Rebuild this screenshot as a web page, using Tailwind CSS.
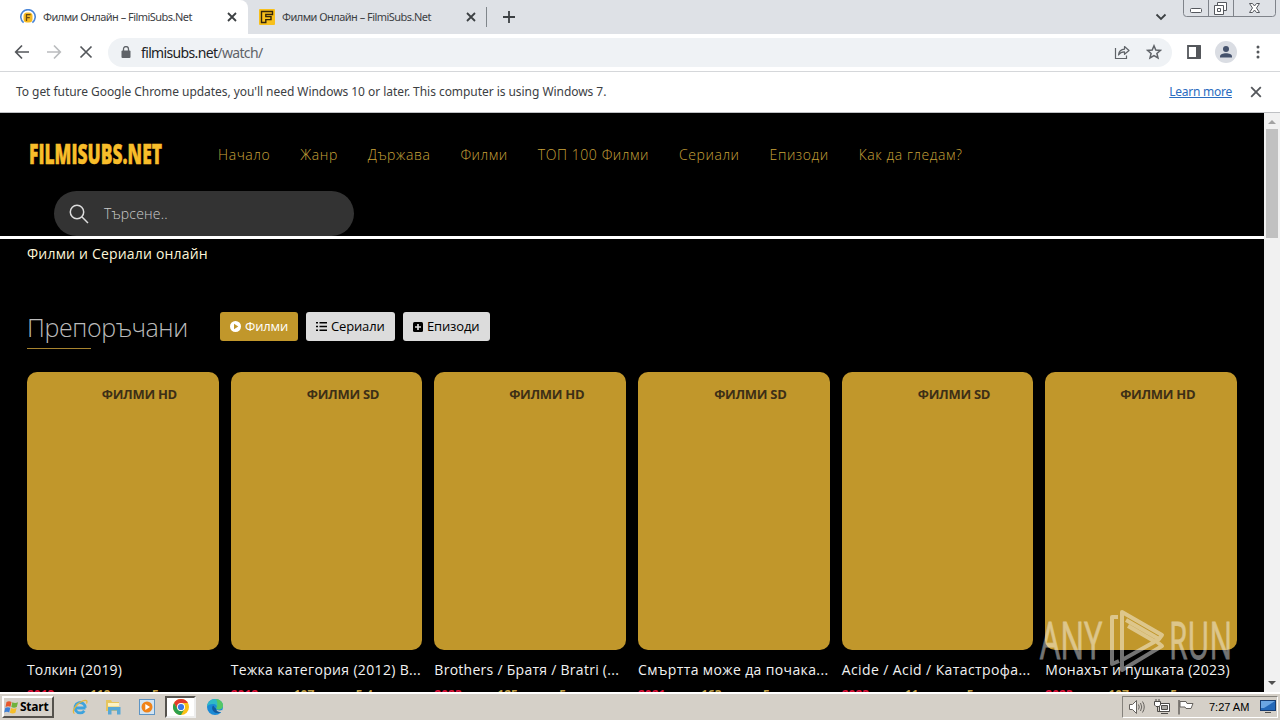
<!DOCTYPE html>
<html lang="bg">
<head>
  <meta charset="UTF-8" />
  <meta name="viewport" content="width=device-width, initial-scale=1.0"/>
  <title>Филми Онлайн – FilmiSubs.Net</title>
  <script src="https://cdn.jsdelivr.net/npm/@tailwindcss/browser@4"></script>
</head>

<body class="w-[1280px] h-[720px] overflow-hidden flex flex-col bg-black font-['Open_Sans','Noto_Sans',sans-serif] whitespace-nowrap">

  <!-- Tab strip -->
  <div class="relative h-[34px] shrink-0 bg-[#dee1e6] flex text-[11px] text-[#3c4043] font-['Noto_Sans',sans-serif]">
    <div class="w-[248px] h-full bg-white rounded-tr-lg flex items-center pl-5 pr-[10px]">
      <svg class="w-4 h-4 shrink-0" viewBox="0 0 16 16" fill="none">
        <path d="M3.6 13.6A7.2 7.2 0 1 1 12.4 13.6" stroke="#4a86d8" stroke-width="1.6"/>
        <rect x="3.500" y="3.500" width="9" height="10" rx="3.500" fill="#f5b921"/>
        <path d="M6.5 12V5.6H10.6M6.5 8.6H9.8" stroke="#6b4a10" stroke-width="1.3"/>
      </svg>
      <span class="ml-[7px] tracking-[-0.53px]">Филми Онлайн – FilmiSubs.Net</span>
      <svg class="w-3 h-3 ml-auto" viewBox="0 0 12 12" stroke="#3c4043" stroke-width="1.8"><path d="M2 2l8 8M10 2l-8 8"/></svg>
    </div>
    <div class="w-[239px] h-full flex items-center pl-[11px] pr-[10px]">
      <svg class="w-4 h-4 shrink-0" viewBox="0 0 16 16" fill="none">
        <rect width="16" height="16" rx="1" fill="#f8c01c"/>
        <path d="M2.5 2.5H13.5V5.5H6.8V7.6H12V10.6H6.8V13.5H2.5Z" stroke="#35270b" stroke-width="1.4"/>
      </svg>
      <span class="ml-[7px] tracking-[-0.53px]">Филми Онлайн – FilmiSubs.Net</span>
      <svg class="w-3 h-3 ml-auto" viewBox="0 0 12 12" stroke="#3c4043" stroke-width="1.8"><path d="M2 2l8 8M10 2l-8 8"/></svg>
    </div>
    <div class="w-px h-5 mt-[7px] -ml-px bg-[#80868b]"></div>
    <svg class="w-[14px] h-[14px] ml-[15px] mt-[10px]" viewBox="0 0 14 14" stroke="#3c4043" stroke-width="1.8"><path d="M7 1v12M1 7h12"/></svg>
    <svg class="w-3 h-3 ml-auto mt-[11px] mr-[113px]" viewBox="0 0 12 12" fill="none" stroke="#3c4043" stroke-width="1.8"><path d="M1.5 3.5L6 8l4.500-4.500"/></svg>
    <!-- Window buttons -->
    <svg class="absolute top-0 right-1 w-[93px] h-[18px]" viewBox="0 0 93 18" fill="none" stroke="#7f838a">
      <path d="M.5 0V13.500Q.5 16.500 3.500 16.500H89.500Q92.500 16.500 92.500 13.500V0M25.500 0V16M50.500 0V16"/>
      <g stroke="#55585e" fill="#fff">
        <rect x="7.500" y="8.500" width="11" height="4" rx="1"/>
        <path d="M34.500 2.500H43.500V10.500H34.500Z"/>
        <path d="M31.500 5.500H40.500V14.500H31.500ZM34.500 8.500H37.500V11.500H34.500Z"/>
        <path d="M66.500 3.500H69.500L71.500 6 73.500 3.500H76.500L73.500 8 76.500 12.500H73.500L71.500 10 69.500 12.500H66.500L69.500 8Z"/>
      </g>
    </svg>
  </div>

  <!-- Toolbar -->
  <div class="h-[38px] shrink-0 bg-white border-b border-[#d5d7da] flex items-center pl-[14px] pr-[14px] pb-px">
    <svg class="w-4 h-4" viewBox="0 0 16 16" fill="none" stroke="#54575b" stroke-width="1.7"><path d="M15 8H2M8 1.500L1.700 8 8 14.500"/></svg>
    <svg class="w-4 h-4 ml-4" viewBox="0 0 16 16" fill="none" stroke="#babcbe" stroke-width="1.700"><path d="M1 8H14M8 1.500L14.300 8 8 14.500"/></svg>
    <svg class="w-[14px] h-[14px] ml-[17px]" viewBox="0 0 14 14" stroke="#54575b" stroke-width="1.700"><path d="M1.500 1.500l11 11M12.500 1.500l-11 11"/></svg>
    <div class="ml-[15px] w-[1064px] h-[29px] rounded-full bg-[#eff2f5] flex items-center pl-[13px] pr-[10px]">
      <svg class="w-[10px] h-3" viewBox="0 0 10 12"><rect x=".5" y="4.500" width="9" height="7.500" rx="1" fill="#5f6368"/><path d="M2.500 5V3a2.500 2.500 0 0 1 5 0V5" fill="none" stroke="#5f6368" stroke-width="1.300"/></svg>
      <span class="ml-[10px] text-[14px] tracking-[-0.65px] text-[#5f6368] font-['Noto_Sans',sans-serif]"><span class="text-[#202124]">filmisubs.net</span>/watch/</span>
      <svg class="w-4 h-4 ml-auto" viewBox="0 0 16 16" fill="none" stroke="#5f6368" stroke-width="1.200"><path d="M1.500 4V14.500H12.500V11.500"/><path d="M4.500 11C5 7.200 7.200 5.300 10.500 5.200V2.500L15 6.500 10.500 10.300V7.800C8 7.700 6 8.700 4.500 11Z" stroke-linejoin="round"/></svg>
      <svg class="w-4 h-4 ml-4" viewBox="0 0 16 16" fill="none" stroke="#5f6368" stroke-width="1.500"><path d="M8 1.800L9.800 6l4.600.4-3.500 3 1.100 4.500L8 11.500l-4 2.400 1.100-4.500-3.500-3L6.200 6Z"/></svg>
    </div>
    <svg class="w-[14px] h-[14px] ml-[15px]" viewBox="0 0 14 14"><path d="M1 1H13V13H1Z" fill="none" stroke="#54575b" stroke-width="1.800"/><path d="M9 1H14V13H9Z" fill="#54575b"/></svg>
    <svg class="w-[22px] h-[22px] ml-[14px]" viewBox="0 0 22 22" fill="#45526c"><circle cx="11" cy="11" r="11" fill="#dadde3"/><circle cx="11" cy="8" r="3"/><path d="M5 16.500V15.500C5 13.300 8 12.300 11 12.300S17 13.300 17 15.500V16.500Z"/></svg>
    <svg class="w-1 h-4 ml-[19px]" viewBox="0 0 4 16" fill="#54575b"><circle cx="2" cy="3" r="1.500"/><circle cx="2" cy="8" r="1.500"/><circle cx="2" cy="13" r="1.500"/></svg>
  </div>

  <!-- Update notice -->
  <div class="h-[41px] shrink-0 bg-white border-b border-[#bfc1c4] flex items-center px-4 text-[12px] text-[#3c4043] font-['Noto_Sans',sans-serif]">
    <span class="tracking-[-0.05px]">To get future Google Chrome updates, you'll need Windows 10 or later. This computer is using Windows 7.</span>
    <span class="ml-auto tracking-[-0.25px] text-[#2a6cc0] underline">Learn more</span>
    <svg class="w-[12px] h-[12px] ml-[18px] mr-[2px]" viewBox="0 0 12 12" stroke="#54575b" stroke-width="1.800"><path d="M1.200 1.200l9.600 9.600M10.800 1.200l-9.600 9.600"/></svg>
  </div>

  <!-- Page -->
  <div class="h-[579px] shrink-0 flex">
    <main class="w-[1264px] h-full overflow-hidden">
      <header class="h-[126px] border-b-[3px] border-white">
        <nav class="h-[78px] pt-[4px] pl-[29px] flex items-center text-[14px] font-light text-[#c9a33a]">
          <svg class="w-[134px] h-6 shrink-0 overflow-visible" viewBox="0 0 134 24"><text x="0" y="22" textLength="133" lengthAdjust="spacingAndGlyphs" font-family="Open Sans" font-weight="800" font-size="28" fill="#f8bd2a" stroke="#f8bd2a" stroke-width=".5">FILMISUBS.NET</text></svg>
          <div class="ml-[55px] flex gap-[30px] tracking-[0.57px]">
            <a>Начало</a>
            <a>Жанр</a>
            <a>Държава</a>
            <a>Филми</a>
            <a>ТОП 100 Филми</a>
            <a>Сериали</a>
            <a>Епизоди</a>
            <a>Как да гледам?</a>
          </div>
        </nav>
        <div class="ml-[54px] w-[300px] h-[45px] rounded-full bg-[#333] flex items-center pl-[15px]">
          <svg class="w-5 h-5" viewBox="0 0 20 20" fill="none" stroke="#ddd" stroke-width="1.500"><circle cx="8" cy="8" r="6.700"/><path d="M12.800 12.800L19 19"/></svg>
          <span class="ml-[15px] text-[14px] tracking-[0.2px] font-light text-[#ccc]">Търсене..</span>
        </div>
      </header>

      <p class="ml-[27px] mt-[4px] text-[14px] tracking-[0.19px] leading-[22px] text-[#fdf6d8]">Филми и Сериали онлайн</p>

      <div class="ml-[27px] mt-[47px] h-[37px] flex">
        <h2 class="relative w-[193px] text-[25px] leading-[31px] tracking-[-0.4px] font-light text-[#bbb]">Препоръчани
          <span class="absolute left-0 bottom-0 w-16 h-px bg-[#a8842f]"></span>
        </h2>
        <div class="flex gap-2 text-[13px] tracking-[-0.15px] text-black">
          <button class="w-[78px] h-[29px] rounded-[3px] bg-[#c1972b] text-white flex items-center pl-[10px] gap-1">
            <svg class="w-[11px] h-[11px]" viewBox="0 0 11 11"><circle cx="5.500" cy="5.500" r="5.500" fill="#fff"/><path d="M4 2.800L8.300 5.500 4 8.200Z" fill="#c1972b"/></svg>
            <span class="pt-px">Филми</span>
          </button>
          <button class="w-[89px] h-[29px] rounded-[3px] bg-[#dcdcdc] flex items-center pl-[10px] gap-1">
            <svg class="w-[11px] h-[11px]" viewBox="0 0 11 11"><path d="M0 1h2v1.500H0zM3.500 1H11v1.500H3.500zM0 4.800h2v1.500H0zM3.500 4.800H11v1.500H3.500zM0 8.500h2V10H0zM3.500 8.500H11V10H3.500z"/></svg>
            <span class="pt-px">Сериали</span>
          </button>
          <button class="w-[87px] h-[29px] rounded-[3px] bg-[#dcdcdc] flex items-center pl-[10px] gap-1">
            <svg class="w-[10px] h-[10px]" viewBox="0 0 10 10"><rect width="10" height="10" rx="1.500"/><path d="M5 2v6M2 5h6" stroke="#dcdcdc" stroke-width="1.700"/></svg>
            <span class="pt-px">Епизоди</span>
          </button>
        </div>
      </div>

      <!-- Movie cards -->
      <div id="movies" class="ml-[27px] mt-[23px] w-[1210px] grid grid-cols-6 gap-3"></div>
    </main>

    <!-- Scrollbar -->
    <div class="w-4 h-full bg-[#f1f1f1] flex flex-col items-center">
      <svg class="w-4 h-4 shrink-0" viewBox="0 0 16 16"><path d="M4 11L8 7l4 4Z" fill="#a3a3a3"/></svg>
      <div class="w-3 h-[109px] bg-[#c1c1c1]"></div>
      <svg class="w-4 h-4 shrink-0 mt-auto" viewBox="0 0 16 16"><path d="M4 5L8 9l4-4Z" fill="#505050"/></svg>
    </div>
  </div>

  <!-- Taskbar -->
  <div class="h-7 shrink-0 bg-[#d5d0c8] border-t-2 border-white flex items-center text-[11px] text-black">
    <div class="ml-[2px] w-[52px] h-[22px] border-2 border-t-white border-l-white border-r-[#55524d] border-b-[#55524d] flex items-center font-bold">
      <svg class="w-[15px] h-[15px] shrink-0" viewBox="0 0 15 15"><path d="M2.500 2Q5 .5 7.500 2L6.500 6.800Q4 5.500 1.500 7Z" fill="#e8572a"/><path d="M8.300 2.300Q11 3.800 14 2.300L12.800 7Q10 8.500 7.300 7Z" fill="#6fb23c"/><path d="M1.300 7.800Q4 6.500 6.300 7.800L5.200 12.500Q3 11 .2 12.500Z" fill="#3d7fd6"/><path d="M7 8Q9.800 9.500 12.600 8L11.400 12.800Q8.800 14.300 5.900 12.800Z" fill="#f5be2a"/></svg>
      <span class="ml-px text-[12px] tracking-[-0.25px]">Start</span>
    </div>
    <!-- Internet Explorer -->
    <svg class="w-4 h-4 ml-[18px]" viewBox="0 0 16 16" fill="none"><path d="M13.500 9H4M13.300 8.800A5.200 5.200 0 1 0 12.300 11.800" stroke="#3ea3dd" stroke-width="2.800"/><path d="M2.500 14.500C-1 13 4 5 10 2.300 14 .5 16 1.500 14.500 4.500" stroke="#e5b73a" stroke-width="1.200"/></svg>
    <!-- Explorer -->
    <svg class="w-4 h-4 ml-[17px]" viewBox="0 0 16 16"><path d="M1 1H6L7 3H14V12H1Z" fill="#e6c55e"/><path d="M3 4H14V7.500H3Z" fill="#fbf2c4"/><path d="M3 15.500V8H15.500V15.500H12V11.500H6.500V15.500Z" fill="#58a8d6"/></svg>
    <!-- Media player -->
    <svg class="w-4 h-4 ml-[18px]" viewBox="0 0 16 16"><rect x=".5" y=".5" width="15" height="15" fill="#d2e4f2" stroke="#5d94c4"/><circle cx="8" cy="8" r="5.500" fill="#f08318"/><path d="M6.300 5L11 8l-4.700 3Z" fill="#fff"/></svg>
    <!-- Chrome -->
    <div class="ml-[10px] w-[31px] h-[22px] bg-white border-2 border-t-[#55524d] border-l-[#55524d] border-r-[#eee] border-b-[#eee] flex items-center justify-center">
      <svg class="w-4 h-4" viewBox="0 0 16 16"><circle cx="8" cy="8" r="8" fill="#fbc116"/><path d="M1.070 4A8 8 0 0 1 14.930 4H8L4.500 10Z" fill="#e33b2e"/><path d="M1.070 4L4.540 10A4 4 0 0 0 8 12L8 16A8 8 0 0 1 1.070 4Z" fill="#2da04d"/><path d="M11.460 10L8 16A8 8 0 0 1 6 15.700L9 11.500Z" fill="#2da04d"/><circle cx="8" cy="8" r="4" fill="#fff"/><circle cx="8" cy="8" r="3.100" fill="#3b78e7"/></svg>
    </div>
    <!-- Edge -->
    <svg class="w-4 h-4 ml-[11px]" viewBox="0 0 16 16"><circle cx="8" cy="8" r="8" fill="#1b8ad6"/><path d="M0 7.500C.5 3 4 0 8 0c4.500 0 8 3 8 6.500C16 9 14 10.500 12 10.500c-2 0-3-.8-2.500-1.600C10.500 7 9 5 6 5 3 5 1 6.300 0 7.500Z" fill="#2fb9c6"/><path d="M9 .1C13 .5 16 3.300 16 6.500 16 9 14 10.500 12 10.500c-2 0-3-.8-2.500-1.600C10.500 7 11 4 9 .1Z" fill="#55c766"/><path d="M6 6.500C4 9 5.500 13.500 10 14c2 .2 3.500-.5 4.700-1.500C12 13 9 12 9 9.500 7.500 9 7 7 6 6.500Z" fill="#125a9e"/><path d="M9.300 9.200c-.5 1.500 1 2.300 3.500 2.200 1.200 0 2.200-.4 3-1L15 13c-3 .3-6-.8-5.700-3.800Z" fill="#d5d0c8"/></svg>
    <!-- Tray -->
    <div class="ml-auto mr-[2px] w-[156px] h-[22px] border border-t-[#85827c] border-l-[#85827c] border-r-white border-b-white flex items-center pl-[6px] font-['Liberation_Sans',sans-serif]">
      <svg class="w-4 h-4" viewBox="0 0 16 16" fill="#fff" stroke="#66635f"><path d="M.5 5.500H3.500L7.500 1.500V14.500L3.500 10.500H.5Z"/><path d="M9.500 5.500Q11 8 9.500 10.500M11.500 4Q14 8 11.500 12M13.500 2.500Q17 8 13.500 13.500" fill="none"/></svg>
      <svg class="w-4 h-4 ml-[9px]" viewBox="0 0 16 16" fill="#fff" stroke="#4d4b48"><path d="M5.500 4.500H15.500V12.500H5.500Z"/><path d="M7.500 6.500H13.500V10.500H7.500Z" fill="#aaa8a3"/><path d="M7 14.500H14M3.500 7V12.500H6" fill="none"/><path d="M.5 2.500H6.500V6L5 7.500H2L.5 6ZM2 0V2.500M5 0V2.500"/></svg>
      <svg class="w-4 h-4 ml-[8px]" viewBox="0 0 16 16" fill="#fff" stroke="#66635f"><path d="M1 1V15.500" stroke-width="1.500"/><path d="M2 2.500H8L9 4.500H15L13 9.500H8L7 8H2Z"/></svg>
      <span class="ml-[15px]">7:27 AM</span>
      <svg class="w-4 h-4 ml-auto mr-[1px]" viewBox="0 0 16 16"><rect x=".5" y="1.500" width="15" height="10" fill="#2468b8" stroke="#173c70"/><path d="M1 2H15L4 9H1Z" fill="#6ba5e2"/><path d="M5 13H11V14H5Z" fill="#4f4d4a"/></svg>
    </div>
  </div>

  <!-- Watermark -->
  <svg class="absolute left-[1036px] top-[606px] w-[200px] h-[68px] overflow-visible" viewBox="0 0 200 68" fill="none" opacity=".45">
    <g fill="#fff" stroke="#fff" stroke-width=".8" font-family="Open Sans" font-size="51" font-weight="400">
      <text x="4" y="53" textLength="62" lengthAdjust="spacingAndGlyphs">ANY</text>
      <text x="133" y="53" textLength="63" lengthAdjust="spacingAndGlyphs">RUN</text>
    </g>
    <path d="M82 11H76V58L83 55M86 50V6L126 29L123 33L90 14M86 20V64L126 40L120 35L86 54M92 20L118 35" stroke="#fff" stroke-width="4" stroke-linejoin="round"/>
  </svg>

  <script>
    const movies = [
      { title: 'Толкин (2019)', spacing: 'tracking-[0.15px]', tag: 'ФИЛМИ HD', year: '2019', mins: '119', rate: '5' },
      { title: 'Тежка категория (2012) B...', spacing: 'tracking-[0.34px]', tag: 'ФИЛМИ SD', year: '2012', mins: '107', rate: '5.4' },
      { title: 'Brothers / Братя / Bratri (...', spacing: 'tracking-[0.27px]', tag: 'ФИЛМИ HD', year: '2023', mins: '125', rate: '5' },
      { title: 'Смъртта може да почака...', spacing: 'tracking-[0.37px]', tag: 'ФИЛМИ SD', year: '2021', mins: '163', rate: '5' },
      { title: 'Acide / Acid / Катастрофа...', spacing: 'tracking-[0.4px]', tag: 'ФИЛМИ SD', year: '2023', mins: '11', rate: '5' },
      { title: 'Монахът и пушката (2023)', spacing: 'tracking-[0.24px]', tag: 'ФИЛМИ HD', year: '2023', mins: '107', rate: '5' }
    ];
    document.getElementById('movies').innerHTML = movies.map(m => `
      <div class="min-w-0">
        <div class="h-[278px] rounded-[10px] bg-[#c1972b] pt-[13px] pl-[33px] text-center text-[13px] tracking-[-0.3px] font-bold text-[#3d2f16]">${m.tag}</div>
        <h3 class="mt-[9px] text-[14px] leading-[22px] font-medium text-[#f2f2f2] ${m.spacing}">${m.title}</h3>
        <div class="mt-[5px] flex text-[12px] leading-[18px] font-bold text-[#c1a04a]">
          <span class="w-[63px] text-[#e0143c]">${m.year}</span>
          <span class="w-[62px]">${m.mins}</span>
          <span>${m.rate}</span>
        </div>
      </div>`).join('');
  </script>

</body>
</html>
